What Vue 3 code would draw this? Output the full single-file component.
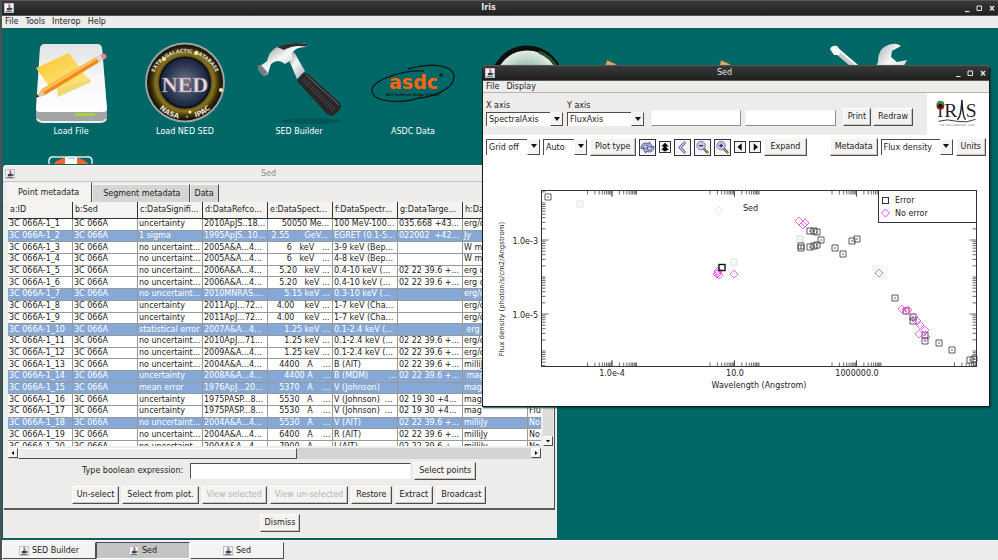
<template>
	<div class="screen">
		<!-- Shared symbols and gradients -->
		<svg class="defs" width="0" height="0" aria-hidden="true">
			<defs>
				<symbol id="java" viewBox="0 0 10 10">
					<rect x="0.5" y="0.5" width="9" height="9" fill="#f4f5f8" stroke="#b9c2cc" />
					<path d="M5.6 1 C3.6 2.4 6.2 3 4.8 5 M6.6 2.6 C5.6 3.3 6 3.8 5.8 4.8" fill="none" stroke="#b8262b" />
					<path d="M2.8 5 H7 V6.6 C7 7.8 2.8 7.8 2.8 6.6 Z" fill="#33414f" />
					<path d="M7 5.4 H8.2 V6.4 H7 M1.8 8.4 H8.2" fill="none" stroke="#33414f" stroke-width="0.8" />
				</symbol>
				<symbol id="win-buttons" viewBox="0 0 34 10">
					<path d="M2 8.5 H6.5" stroke="#e6e6e6" stroke-width="1.2" />
					<path d="M14 3 H18.5 V7.5 H14 Z" fill="none" stroke="#e6e6e6" />
					<path d="M27 3 L31 7.5 M31 3 L27 7.5" stroke="#e6e6e6" stroke-width="1.4" />
				</symbol>
				<linearGradient id="g-disk" x1="0" y1="0" x2="0" y2="1">
					<stop offset="0" stop-color="#e3e3e5" />
					<stop offset="0.5" stop-color="#f6f6f7" />
					<stop offset="1" stop-color="#ffffff" />
				</linearGradient>
				<linearGradient id="g-note" x1="0" y1="0" x2="1" y2="1">
					<stop offset="0" stop-color="#fbc62c" />
					<stop offset="1" stop-color="#fde98a" />
				</linearGradient>
				<linearGradient id="g-metal" x1="0" y1="0" x2="1" y2="1">
					<stop offset="0" stop-color="#6d7174" />
					<stop offset="0.45" stop-color="#f7f8f8" />
					<stop offset="1" stop-color="#a9adb0" />
				</linearGradient>
				<radialGradient id="g-gold">
					<stop offset="0.6" stop-color="#2e2704" />
					<stop offset="0.76" stop-color="#8b7420" />
					<stop offset="0.88" stop-color="#3c330b" />
					<stop offset="1" stop-color="#0d0c08" />
				</radialGradient>
				<radialGradient id="g-space">
					<stop offset="0" stop-color="#7d7684" />
					<stop offset="0.6" stop-color="#35415a" />
					<stop offset="1" stop-color="#18233a" />
				</radialGradient>
				<radialGradient id="g-lens">
					<stop offset="0" stop-color="#6b9db0" />
					<stop offset="0.55" stop-color="#a9c8bb" />
					<stop offset="1" stop-color="#f1f3ee" />
				</radialGradient>
			</defs>
		</svg>

		<header class="title-bar">
			<svg class="java"><use href="#java" /></svg>
			<h1 class="title bold">Iris</h1>
			<svg class="win-buttons"><use href="#win-buttons" /></svg>
		</header>
		<nav class="menu-bar">
			<button v-for="item in mainMenu" :key="item" type="button" class="menu-item">{{ item }}</button>
		</nav>

		<main class="desktop">
			<div class="launchers">
				<button type="button" class="launcher">
					<svg viewBox="0 0 86 86">
						<path d="M8 70 L12 8 Q13 4 17 4 H69 Q73 4 74 8 L79 70 V77 Q79 81 75 81 H12 Q8 81 8 77 Z" fill="#a3a4a6" />
						<path d="M8 69 L12 8 Q13 4 17 4 H69 Q73 4 74 8 L79 69 Q79 72 75 72 H12 Q8 72 8 69 Z" fill="url(#g-disk)" />
						<path d="M9 79 Q11 82 15 82 H72 Q77 82 78 79" fill="none" stroke="#ececec" stroke-width="2" />
						<path d="M47 74.5 H67" stroke="#a9d82c" stroke-width="2.5" />
						<path d="M29 46 L61 38 L63 42 L30 57 Z" fill="#f2d872" />
						<path d="M8 28 L41 13 L61 40 L24 50 Z" fill="url(#g-note)" />
						<path d="M7 58 L14 49 L70 16 L73 21 L17 55 Z" fill="#f08a1c" />
						<path d="M14 49.5 L70 16 L71.5 18 L16 51.5 Z" fill="#ffc25a" />
						<path d="M7 58 L14 49 L17 55 Z" fill="#e9c79b" />
						<path d="M7 58 L9.5 54.5 L11 56.5 Z" fill="#222" />
						<path d="M68 17 L72 15 L75 20 L71 22 Z" fill="#d9dadd" />
						<path d="M72 15 L76 13.5 Q80 16 78 18 L75 20 Z" fill="#e98a92" />
					</svg>
					<span>Load File</span>
				</button>
				<button type="button" class="launcher">
					<svg viewBox="0 0 86 86">
						<circle cx="43" cy="42.5" r="40" fill="#9ea2a3" />
						<circle cx="43" cy="42.5" r="38" fill="url(#g-gold)" />
						<circle cx="43" cy="42.5" r="25" fill="url(#g-space)" stroke="#0f1420" stroke-width="2" />
						<path id="ring-top" d="M9.500 46 A33.500 33.500 0 1 1 76.500 46" fill="none" />
						<path id="ring-bottom" d="M9 55 A36 36 0 0 0 77 55" fill="none" />
						<text class="ring-small"><textPath href="#ring-top" startOffset="50%" text-anchor="middle">EXTRAGALACTIC DATABASE</textPath></text>
						<text class="ring-large"><textPath href="#ring-bottom" startOffset="50%" text-anchor="middle">NASA &nbsp; · &nbsp; IPAC</textPath></text>
						<g fill="#ffe9a0">
							<circle cx="22" cy="19" r="2" /><circle cx="54" cy="13" r="2" />
							<circle cx="79" cy="50" r="2" /><circle cx="48" cy="72" r="1.5" />
						</g>
						<text x="43" y="52" class="ned">NED</text>
					</svg>
					<span>Load NED SED</span>
				</button>
				<button type="button" class="launcher">
					<svg viewBox="0 0 86 86">
						<ellipse cx="55" cy="81" rx="30" ry="3" fill="#003f40" opacity="0.4" />
						<path d="M30 13 L38 12 L49 31 L41 39 Z" fill="url(#g-metal)" />
						<path d="M2 26 Q5 26 11 21 Q13 11 21 7 Q34 1 51 4 L52 7 Q40 6 36 13 L37 19 L29 24 Q22 18 15 24 Q13 30 12 34 L8 36 L2 29 Z" fill="url(#g-metal)" />
						<path d="M21 7 Q34 1 51 4 L52 7 Q38 4 28 10 Z" fill="#2b2d2f" />
						<path d="M2 26 L5 25 L12 33 L8 36 Q5 35 2 29 Z" fill="#777b7e" />
						<path d="M47 33 L52 34 L84 63 Q87 70 76 76 L71 74 L41 41 Z" fill="#2b2627" />
						<path d="M47 39 L78 70" stroke="#4d4748" stroke-width="5" stroke-dasharray="1 2" />
						<path d="M50 35 L83 65" stroke="#756e70" />
					</svg>
					<span>SED Builder</span>
				</button>
				<button type="button" class="launcher">
					<svg viewBox="0 0 86 86">
						<g fill="none" stroke="#101c1c" stroke-width="1.4">
							<path d="M38 29 C62 22 84 25 84 37 C84 50 60 57 50 58" />
							<path d="M54 31 C30 30 1 41 2 51 C3 63 35 64 51 57" />
						</g>
						<text x="19" y="49" class="asdc">asdc</text>
						<circle cx="71" cy="35" r="1.8" fill="#101c1c" />
						<text x="43" y="56" class="asdc-small">ASI Science Data Center</text>
					</svg>
					<span>ASDC Data</span>
				</button>
				<button type="button" class="launcher" aria-label="Viewer">
					<svg viewBox="0 0 86 86">
						<circle cx="43" cy="42" r="34" fill="url(#g-lens)" stroke="#0c100c" stroke-width="5" />
						<path d="M55 12 A34 34 0 0 1 73 28" fill="none" stroke="#26552c" stroke-width="3" />
					</svg>
				</button>
				<button v-for="n in 2" :key="n" type="button" class="launcher" aria-label="Tool">
					<svg viewBox="0 0 86 86"><path d="M7 26 L9 20 L18 24 L22 30 L10 32 Z" fill="#c9b27c" stroke="#6e5a33" /></svg>
				</button>
				<button type="button" class="launcher" aria-label="Settings">
					<svg viewBox="0 0 86 86">
						<path d="M8 9 L40 36" stroke="#c9cccf" stroke-width="5" />
						<path d="M4 9 Q6 5 11 6 L15 11 L13 15 L8 15 Z" fill="#fdfdfd" />
						<path d="M13 10 L40 33" stroke="#fafafa" stroke-width="2" />
						<path d="M52 22 Q52 6 66 4 Q71 3 75 6 L66 11 L65 17 L71 22 L81 20 Q77 30 66 32 L40 70 L32 62 Z" fill="url(#g-metal)" />
					</svg>
				</button>
				<button type="button" class="launcher" aria-label="Help">
					<svg viewBox="0 0 86 86">
						<circle cx="43" cy="31" r="20" fill="none" stroke="#f0652a" stroke-width="14" />
						<path d="M37 4 H49 V18 H37 Z" fill="#fff" />
						<path d="M40 3 H47 V6 H40 Z" fill="#a9cdf0" />
						<path d="M21 16 V7 Q22 3 27 4 H58 Q63 3 64 7 V16" fill="none" stroke="#dfe9ec" stroke-width="1.5" />
					</svg>
				</button>
			</div>

			<!-- Metadata browser -->
			<section class="window meta-window">
				<div class="title-bar light">
					<svg class="java"><use href="#java" /></svg>
					<h2 class="title">Sed</h2>
					<svg class="win-buttons"><use href="#win-buttons" /></svg>
				</div>
				<div class="meta-panel">
					<div class="tabs" role="tablist">
						<button
							v-for="tab in tabs"
							:key="tab"
							type="button"
							role="tab"
							:class="['tab', { active: tab === activeTab }]"
							@click="activeTab = tab"
						>{{ tab }}</button>
					</div>
					<div class="table-area">
						<div class="table-clip">
							<table class="points">
								<thead>
									<tr><th v-for="head in headers" :key="head">{{ head }}</th></tr>
								</thead>
								<tbody>
									<tr v-for="(row, i) in rows" :key="i" :class="{ selected: selected.includes(i + 1) }">
										<td>3C 066A-1_{{ i + 1 }}</td>
										<td>3C 066A</td>
										<td v-for="(cell, c) in row" :key="c">{{ cell }}</td>
									</tr>
								</tbody>
							</table>
						</div>
						<div class="v-scroll">
							<div class="v-thumb"></div>
							<button type="button" class="scroll-btn" aria-label="Down"><svg viewBox="0 0 8 8"><path d="M2 3 H6 L4 5.5 Z" /></svg></button>
						</div>
						<div class="h-scroll">
							<button type="button" class="scroll-btn" aria-label="Left"><svg viewBox="0 0 8 8"><path d="M5 2 V6 L2.5 4 Z" /></svg></button>
							<div class="h-thumb"></div>
							<div class="h-track"></div>
							<button type="button" class="scroll-btn" aria-label="Right"><svg viewBox="0 0 8 8"><path d="M3 2 V6 L5.5 4 Z" /></svg></button>
						</div>
					</div>
					<div class="expression">
						<label for="expression">Type boolean expression:</label>
						<input id="expression" v-model="expression" type="text" class="field sunken">
						<button type="button" class="btn">Select points</button>
					</div>
					<div class="actions">
						<button
							v-for="action in actions"
							:key="action"
							type="button"
							class="btn"
							:disabled="action.startsWith('View')"
						>{{ action }}</button>
					</div>
				</div>
				<div class="dismiss"><button type="button" class="btn">Dismiss</button></div>
			</section>

			<!-- Plot -->
			<section class="window plot-window">
				<div class="title-bar">
					<svg class="java"><use href="#java" /></svg>
					<h2 class="title">Sed</h2>
					<svg class="win-buttons"><use href="#win-buttons" /></svg>
				</div>
				<nav class="menu-bar plot-menu">
					<button type="button" class="menu-item">File</button>
					<button type="button" class="menu-item">Display</button>
				</nav>
				<div class="axis-bar">
					<div class="axis-controls">
						<div class="axis">
							<label for="x-axis">X axis</label>
							<span class="combo"><select id="x-axis"><option>SpectralAxis</option></select><i class="arrow"></i></span>
						</div>
						<div class="axis">
							<label for="y-axis">Y axis</label>
							<span class="combo"><select id="y-axis"><option>FluxAxis</option></select><i class="arrow"></i></span>
						</div>
						<div class="coords">
							<input type="text" class="field" aria-label="X position">
							<input type="text" class="field" aria-label="Y position">
						</div>
						<div class="axis-buttons">
							<button type="button" class="btn">Print</button>
							<button type="button" class="btn">Redraw</button>
						</div>
					</div>
					<svg class="logo" viewBox="0 0 62 43">
						<text x="10" y="25" class="logo-text">ı</text>
						<text x="17" y="25" class="logo-text">R</text>
						<text x="39" y="25" class="logo-text">S</text>
						<circle cx="13" cy="13" r="4" fill="#8e1f1a" />
						<path d="M9 12 A4 4 0 0 1 17 12 Z" fill="#3d8c52" />
						<circle cx="13" cy="13" r="2" fill="#111" />
						<path d="M30 27 Q34 26 35 7 Q36 26 39 27" fill="none" stroke="#222" stroke-width="1.5" />
						<path d="M11 29 Q20 26 30 29 Q40 31 49 27" fill="none" stroke="#333" />
						<text x="30" y="34" class="logo-small">THE SED ANALYSIS TOOL</text>
					</svg>
				</div>
				<div class="tool-bar">
					<span class="combo grid-combo"><select aria-label="Grid"><option>Grid off</option></select><i class="arrow"></i></span>
					<span class="combo scale-combo"><select aria-label="Scale"><option>Auto</option></select><i class="arrow"></i></span>
					<button type="button" class="btn">Plot type</button>
					<button type="button" class="icon-btn" aria-label="Refresh">
						<svg viewBox="0 0 16 16">
							<g fill="#aeb0dc" stroke="#3e3f6b" stroke-width="0.8">
								<path d="M1 9 C1 4 5 2 9 4 L10 2 L13 7 L8 8 L8.5 6 C5 5 4 6 3.5 9 Z" />
								<path d="M15 7 C15 12 11 14 7 12 L6 14 L3 9 L8 8 L7.5 10 C11 11 12 10 12.5 7 Z" />
							</g>
						</svg>
					</button>
					<button type="button" class="icon-btn small" aria-label="Top">
						<svg viewBox="0 0 12 12"><path d="M6 1 L10.5 5.5 H7.5 V6 L10.5 9.5 H8 V11 H4 V9.5 H1.5 L4.5 6 V5.5 H1.5 Z" /></svg>
					</button>
					<button type="button" class="icon-btn" aria-label="Back">
						<svg viewBox="0 0 16 16"><path d="M11 2 L5.5 8 L11 14" fill="none" stroke="#55567e" stroke-width="3" /><path d="M11 2 L5.5 8 L11 14" fill="none" stroke="#c9cbe8" stroke-width="1.5" /></svg>
					</button>
					<button v-for="zoom in ['Zoom out', 'Zoom in']" :key="zoom" type="button" class="icon-btn" :aria-label="zoom">
						<svg viewBox="0 0 16 16">
							<path d="M9 9 L14 14" stroke="#5d5337" stroke-width="2.5" />
							<path d="M9 9 L14 14" stroke="#d6b45c" />
							<circle cx="6.5" cy="6" r="4.5" fill="#c8c9ec" stroke="#77789a" />
							<path d="M4.5 6 H8.5" stroke="#222244" stroke-width="1.2" />
							<path v-if="zoom === 'Zoom in'" d="M6.5 4 V8" stroke="#222244" stroke-width="1.2" />
						</svg>
					</button>
					<button type="button" class="icon-btn small" aria-label="Left">
						<svg viewBox="0 0 12 12"><path d="M8 1.5 V10.5 L3 6 Z" /></svg>
					</button>
					<button type="button" class="icon-btn small" aria-label="Right">
						<svg viewBox="0 0 12 12"><path d="M4.5 1.5 V10.5 L9.5 6 Z" /></svg>
					</button>
					<button type="button" class="btn expand">Expand</button>
					<span class="spacer"></span>
					<button type="button" class="btn">Metadata</button>
					<span class="combo flux-combo"><select aria-label="Quantity"><option>Flux density</option></select><i class="arrow"></i></span>
					<button type="button" class="btn">Units</button>
				</div>

				<svg class="plot" viewBox="483 160 506 246">
					<rect x="541.5" y="190.5" width="435" height="176" fill="none" stroke="#333" />
					<path :d="tickPath" fill="none" stroke="#444" stroke-width="0.8" />
					<rect x="878.5" y="190.5" width="98" height="32" fill="#fff" stroke="#333" />
					<path v-for="(p, i) in squares" :key="'s' + i" :d="squarePath(p)" fill="none" :stroke="p[2] || '#333'" stroke-width="0.8" />
					<path v-for="(p, i) in diamonds" :key="'d' + i" :d="diamondPath(p)" fill="none" :stroke="p[2] || '#ee44ee'" stroke-width="0.8" />
					<rect x="719" y="264.5" width="6" height="6" fill="none" stroke="#111" stroke-width="1.4" />
					<rect x="882.5" y="197.5" width="6" height="6" fill="none" stroke="#333" />
					<path :d="diamondPath([885.5, 213])" fill="none" stroke="#ee44ee" />
					<text x="895" y="203">Error</text>
					<text x="895" y="216">No error</text>
					<text x="743" y="211">Sed</text>
					<text x="538" y="244" text-anchor="end">1.0e-3</text>
					<text x="538" y="318" text-anchor="end">1.0e-5</text>
					<text x="612" y="376" text-anchor="middle">1.0e-4</text>
					<text x="735" y="376" text-anchor="middle">10.0</text>
					<text x="857" y="376" text-anchor="middle">1000000.0</text>
					<text x="759" y="388" text-anchor="middle">Wavelength (Angstrom)</text>
					<text class="y-title" transform="translate(504 289) rotate(-90)" text-anchor="middle">Flux density (photon/s/cm2/Angstrom)</text>
				</svg>
			</section>
		</main>

		<footer class="task-bar">
			<button
				v-for="(task, i) in tasks"
				:key="i"
				type="button"
				:class="['task', { pressed: i === 1 }]"
			><svg class="java"><use href="#java" /></svg>{{ task }}</button>
		</footer>
	</div>
</template>

<script setup>
import { ref } from 'vue';

//#region Data
const mainMenu = ['File', 'Tools', 'Interop', 'Help'];
const tasks = ['SED Builder', 'Sed', 'Sed'];
const tabs = ['Point metadata', 'Segment metadata', 'Data'];
const activeTab = ref('Point metadata');
const expression = ref('');
const actions = ['Un-select', 'Select from plot.', 'View selected', 'View un-selected', 'Restore', 'Extract', 'Broadcast'];

const headers = ['a:ID', 'b:Sed', 'c:DataSignifi...', 'd:DataRefco...', 'e:DataSpect...', 'f:DataSpectr...', 'g:DataTarge...', 'h:Data...', 'i:Data...'];
const selected = [2, 7, 10, 14, 15, 18]; // Row numbers, from 1
// Columns c to i, the spaces in column e are part of the value
const rows = [
	['uncertainty', '2010ApJS..18...', '     50050 Me...', '100 MeV-100...', '035.668 +43...', 'erg/cm2...', ''],
	['1 sigma', '1995ApJS..10...', ' 2.55      GeV...', 'EGRET (0.1-5...', '022002  +42...', 'Jy', ''],
	['no uncertaint...', '2005A&A...4...', '       6   keV   ...', '3-9 keV (Bep...', '', 'W m-2', ''],
	['no uncertaint...', '2005A&A...4...', '       6   keV   ...', '4-8 keV (Bep...', '', 'W m-2', ''],
	['no uncertaint...', '2006A&A...4...', '    5.20   keV ...', '0.4-10 keV (...', '02 22 39.6 +...', 'erg cm', ''],
	['no uncertaint...', '2006A&A...4...', '    5.20   keV ...', '0.4-10 keV (...', '02 22 39.6 +...', 'erg cm', ''],
	['no uncertaint...', '2010MNRAS....', '      5.15 keV ...', '0.3-10 keV (...', '', 'erg/cm2', ''],
	['uncertainty', '2011ApJ...72...', '   4.00    keV ...', '1-7 keV (Cha...', '', 'erg/cm2', ''],
	['uncertainty', '2011ApJ...72...', '   4.00    keV ...', '1-7 keV (Cha...', '', 'erg/cm2', ''],
	['statistical error', '2007A&A...4...', '      1.25 keV ...', '0.1-2.4 keV (...', '', ' erg cm', ''],
	['no uncertaint...', '2010ApJ...71...', '      1.25 keV ...', '0.1-2.4 keV (...', '02 22 39.6 +...', 'erg/cm2', ''],
	['no uncertaint...', '2009A&A...4...', '      1.25 keV ...', '0.1-2.4 keV (...', '02 22 39.6 +...', 'erg/cm2', ''],
	['no uncertaint...', '2004A&A...4...', '    4400   A    ...', 'B (AIT)', '02 22 39.6 +...', 'milliJy', ''],
	['uncertainty', '2008A&A...4...', '      4400 A    ...', 'B (MDM)        ...', '02 22 39.6 +...', ' mag', ''],
	['mean error', '1976ApJ...20...', '    5370   A    ...', 'V (Johnson)', '', 'mag', ''],
	['uncertainty', '1975PASP...8...', '    5530   A    ...', 'V (Johnson)  ...', '02 19 30 +4...', 'mag', ''],
	['uncertainty', '1975PASP...8...', '    5530   A    ...', 'V (Johnson)  ...', '02 19 30 +4...', 'mag', 'Flu'],
	['no uncertaint...', '2004A&A...4...', '    5530   A    ...', 'V (AIT)', '02 22 39.6 +...', 'milliJy', 'No'],
	['no uncertaint...', '2004A&A...4...', '    6400   A    ...', 'R (AIT)', '02 22 39.6 +...', 'milliJy', 'No'],
	['no uncertaint...', '2004A&A...4...', '    7900   A    ...', 'I (AIT)', '02 22 39.6 +...', 'milliJy', 'No'],
];

// Plot points: x, y and an optional colour
const squares = [
	[548, 197], [580, 204, '#ccdccc'], [734, 262, '#ccdccc'], [800, 239, '#cccccc'],
	[801, 246], [801, 248], [810, 231], [814, 231], [817, 232], [810, 247], [814, 246], [817, 245],
	[821, 240], [835, 248], [843, 254], [852, 241], [857, 239], [895, 298], [906, 311],
	[913, 317], [913, 321], [925, 335], [925, 341], [939, 343], [952, 350], [970, 360], [974, 359],
];
const diamonds = [
	[719, 211, '#f7d5f7'], [718, 271], [718, 273], [719, 275], [717, 274], [734, 274],
	[799, 221], [803, 225], [805, 223], [879, 273], [902, 309], [908, 310], [906, 311],
	[914, 317], [917, 321], [920, 325], [919, 334], [925, 330], [926, 337],
];

// Log ticks on the four sides of the frame
const left = 541.5, right = 976.5, top = 190.5, bottom = 366.5;
const decade = 24.5; // One x decade
const yDecade = 37; // One y decade
let tickPath = '';
for (const major of [612, 734.5, 856.5, 979]) {
	for (const start of [major - decade, major]) {
		for (let k = 1; k <= 10; k++) {
			const x = start + decade * Math.log10(k);
			if (x > right) continue;
			const len = x === major ? 6 : 4;
			tickPath += `M${x} ${top}v${len}M${x} ${bottom}v${-len}`;
		}
	}
}
for (let d = 0; d < 6; d++) {
	for (let k = 1; k <= 9; k++) {
		const y = 203 + yDecade * (d - Math.log10(k));
		if (y < top || y > bottom) continue;
		const len = k === 1 && d % 2 === 1 ? 7 : 4;
		tickPath += `M${left} ${y}h${len}M${right} ${y}h${-len}`;
	}
}
//#endregion Data

//#region Method
const squarePath = ([x, y]) => `M${x - 3} ${y - 3}h6v6h-6zM${x} ${y - 1}v2`;
const diamondPath = ([x, y]) => `M${x} ${y - 4}l4 4l-4 4l-4 -4z`;
//#endregion Method
</script>

<style>
body {
	margin: 0;
	overflow: hidden;
}
</style>

<style scoped>
.screen {
	display: flex;
	flex-direction: column;
	height: 100vh;
	box-sizing: border-box;
	border-left: 2px solid #4a5254;
	background: #edeceb;
	color: #1c1c1c;
	font-family: "DejaVu Sans", sans-serif;
	font-size: 8px;
	line-height: 10px;
}
.defs {
	position: absolute;
}
button, input, select {
	font: inherit;
	color: inherit;
	margin: 0;
	box-sizing: border-box;
	border-radius: 0;
	outline: none;
}
.title-bar {
	display: flex;
	align-items: center;
	height: 16px;
	box-sizing: border-box;
	padding: 0 1px 0 2px;
	border-top: 1px solid #555;
	border-bottom: 1px solid #4c5a60;
	background: linear-gradient(#393939, #202020);
	color: #e8e8e8;
}
.title {
	flex: 1;
	margin: 0;
	font-size: 8px;
	font-weight: normal;
	text-align: center;
}
.title.bold {
	font-weight: bold;
}
.java {
	width: 10px;
	height: 10px;
}
.win-buttons {
	width: 34px;
	height: 10px;
}
.title-bar.light {
	height: 17px;
	border-top-color: #fafafa;
	border-bottom-color: #c4c3c1;
	background: #edeceb;
	color: #8b8b8b;
}
.menu-bar {
	display: flex;
	gap: 7px;
	height: 12px;
	padding: 0 3px;
	background: #edeceb;
}
.menu-item {
	padding: 0;
	border: 0;
	background: none;
}

/* Desktop */
.desktop {
	position: relative;
	flex: 1;
	min-height: 0;
	overflow: hidden;
	background: #006767;
}
.launchers {
	display: grid;
	grid-template-columns: repeat(8, 114px);
	padding: 12px 12px 0;
	row-gap: 16px;
}
.launcher {
	display: flex;
	flex-direction: column;
	align-items: center;
	padding: 0;
	border: 0;
	background: none;
	color: #fff;
}
.launcher svg {
	width: 86px;
	height: 86px;
	margin-bottom: 1px;
}
.ring-small, .ring-large {
	fill: #e3e0d4;
	font-size: 5px;
	font-weight: bold;
}
.ring-large {
	font-size: 7px;
}
.ned {
	fill: #e6dbe0;
	stroke: #8a7f8e;
	stroke-width: 0.5;
	font-family: "Liberation Serif", serif;
	font-size: 22px;
	font-weight: bold;
	text-anchor: middle;
}
.asdc {
	fill: #f9660c;
	font-size: 19px;
	font-weight: bold;
}
.asdc-small {
	fill: #101c1c;
	font-size: 4px;
	font-weight: bold;
	text-anchor: middle;
}

/* Windows */
.window {
	position: absolute;
	box-sizing: border-box;
	background: #edeceb;
}
.meta-window {
	left: 1px;
	top: 137px;
	width: 554px;
	border-radius: 4px 4px 0 0;
	box-shadow: 0 0 0 1px #0f5c5c;
	overflow: hidden;
}
.plot-window {
	left: 480px;
	top: 37px;
	width: 508px;
	border: 1px solid #1c1c1c;
	border-top: 0;
	border-radius: 4px 4px 0 0;
	background: #fff;
	overflow: hidden;
	box-shadow: 1px 1px 2px #023c3c;
}

/* Common controls */
.btn {
	height: 18px;
	padding: 0 4px;
	border: 1px solid;
	border-color: #fff #4d4d4d #4d4d4d #fff;
	background: #f4f3f2;
	white-space: nowrap;
	box-shadow: inset -1px -1px #c9c8c6;
}
.btn:disabled {
	color: #b4b3b1;
}
.field {
	height: 16px;
	min-width: 0;
	padding: 0 3px;
	border: 1px solid;
	border-color: #f4f4f4 #8d8c8a #8d8c8a #f4f4f4;
	background: #fff;
}
.field.sunken {
	border-color: #4d4d4d #f4f4f4 #f4f4f4 #4d4d4d;
}
.combo {
	position: relative;
	display: block;
	height: 14px;
	box-sizing: border-box;
	border-top: 1px solid #4d4d4d;
	border-left: 1px solid #4d4d4d;
	background: #fff;
}
.combo select {
	display: block;
	width: 100%;
	height: 100%;
	padding: 0 0 0 2px;
	border: 0;
	background: none;
	appearance: none;
}
.arrow {
	position: absolute;
	top: -1px;
	right: 0;
	bottom: 0;
	width: 13px;
	box-sizing: border-box;
	border: 1px solid;
	border-color: #fff #4d4d4d #4d4d4d #fff;
	background: #f4f3f2;
	pointer-events: none;
}
.arrow::after {
	content: "";
	display: block;
	width: 0;
	margin: 4px auto 0;
	border: 3px solid transparent;
	border-top: 4px solid #111;
	border-bottom: 0;
}

/* Metadata window */
.meta-panel {
	margin: 0 2px 0 1px;
	padding-bottom: 4px;
	border-right: 1px solid #4d4d4d;
	border-bottom: 2px solid #5b5b5b;
}
.tabs {
	display: flex;
	align-items: flex-end;
	gap: 1px;
	padding-left: 3px;
	height: 20px;
}
.tab {
	height: 18px;
	padding: 0 4px;
	border: 0;
	border-top: 1px solid #f4f3f2;
	border-right: 1px solid #4d4d4d;
	background: #d6d5d3;
}
.tab:nth-child(2) {
	padding: 0 8px 0 10px;
}
.tab.active {
	height: 20px;
	padding: 0 12px 0 11px;
	background: #f4f3f2;
}
.table-area {
	display: grid;
	grid-template-columns: 1fr 10px;
	gap: 2px;
	padding: 0 1px 0 4px;
}
.table-clip {
	height: 244px;
	overflow: hidden;
	background: #fff;
}
.points {
	width: 585px;
	height: 251px;
	table-layout: fixed;
	border-collapse: separate;
	border-spacing: 0;
}
.points th {
	height: 16px;
	padding: 0 0 0 2px;
	border-right: 1px solid #333;
	border-bottom: 1px solid #333;
	background: #f4f3f2;
	font-weight: normal;
	text-align: left;
	white-space: nowrap;
	overflow: hidden;
}
.points td {
	padding: 0 0 0 1px;
	border-right: 1px solid #999;
	border-bottom: 1px solid #999;
	white-space: pre;
	overflow: hidden;
}
.points .selected td {
	background: #86a8d6;
	color: #fff;
}
.v-scroll {
	display: flex;
	flex-direction: column;
	background: #d5d4d2;
}
.v-thumb {
	flex: 1;
	background: #dddcda;
}
.h-scroll {
	display: flex;
	height: 11px;
	background: #d5d4d2;
}
.h-thumb {
	width: 279px;
	box-sizing: border-box;
	border: 1px solid;
	border-color: #fff #4d4d4d #4d4d4d #fff;
	background: #edeceb;
}
.h-track {
	flex: 1;
}
.scroll-btn {
	display: block;
	width: 10px;
	height: 10px;
	padding: 0;
	border: 1px solid;
	border-color: #fff #4d4d4d #4d4d4d #fff;
	background: #f4f3f2;
}
.scroll-btn svg {
	display: block;
	width: 8px;
	height: 8px;
}
.expression {
	display: flex;
	align-items: center;
	justify-content: center;
	gap: 3px;
	margin-top: 3px;
}
.expression label {
	margin-right: 4px;
}
.expression .field {
	width: 221px;
}
.actions {
	display: flex;
	justify-content: center;
	gap: 3px;
	margin-top: 6px;
}
.dismiss {
	display: flex;
	justify-content: center;
	padding: 4px 0 6px;
}

/* Plot window */
.plot-menu {
	height: 11px;
	border-bottom: 1px solid #b5b4b2;
}
.axis-bar {
	display: flex;
	background: #edeceb;
}
.axis-controls {
	display: flex;
	flex: 1;
	align-items: flex-end;
	gap: 4px;
	padding: 0 14px 9px 3px;
}
.axis {
	width: 77px;
}
.axis label {
	display: block;
	margin-bottom: 1px;
}
.coords {
	display: flex;
	flex: 1;
	gap: 4px;
	margin: 0 3px;
}
.coords .field {
	flex: 1;
	width: 0;
}
.axis-buttons {
	display: flex;
	gap: 2px;
}
.logo {
	display: block;
	flex: none;
	width: 62px;
	height: 42px;
	background: #fff;
}
.logo-text {
	fill: #222;
	font-family: "Liberation Serif", serif;
	font-size: 20px;
}
.logo-small {
	fill: #777;
	font-size: 3px;
	text-anchor: middle;
}
.tool-bar {
	display: flex;
	align-items: center;
	gap: 3px;
	padding: 3px 3px 4px;
}
.grid-combo {
	width: 54px;
	height: 16px;
}
.scale-combo {
	width: 44px;
	height: 16px;
}
.flux-combo {
	width: 72px;
	height: 16px;
}
.icon-btn {
	width: 17px;
	height: 17px;
	padding: 0;
	border: 1px solid #333;
	background: #f4f4fa;
}
.icon-btn svg {
	display: block;
	width: 100%;
	height: 100%;
}
.icon-btn.small {
	width: 12px;
	height: 12px;
}
.expand {
	padding: 0 6px;
}
.spacer {
	flex: 1;
}
.plot {
	display: block;
	width: 100%;
}
.plot text {
	fill: #222;
	font-size: 8px;
}
.plot .y-title {
	font-size: 7px;
}

/* Task bar */
.task-bar {
	display: flex;
	height: 20px;
	box-sizing: border-box;
	padding: 1px 0;
	border-top: 1px solid #f8f8f8;
	background: #edeceb;
}
.task {
	display: flex;
	align-items: center;
	justify-content: center;
	gap: 3px;
	width: 94px;
	padding: 0;
	border: 1px solid;
	border-color: #fff #4d4d4d #4d4d4d #fff;
	background: #f4f3f2;
}
.task.pressed {
	border-color: #4d4d4d #fff #fff #4d4d4d;
	background: #c5c4c2;
}
</style>
